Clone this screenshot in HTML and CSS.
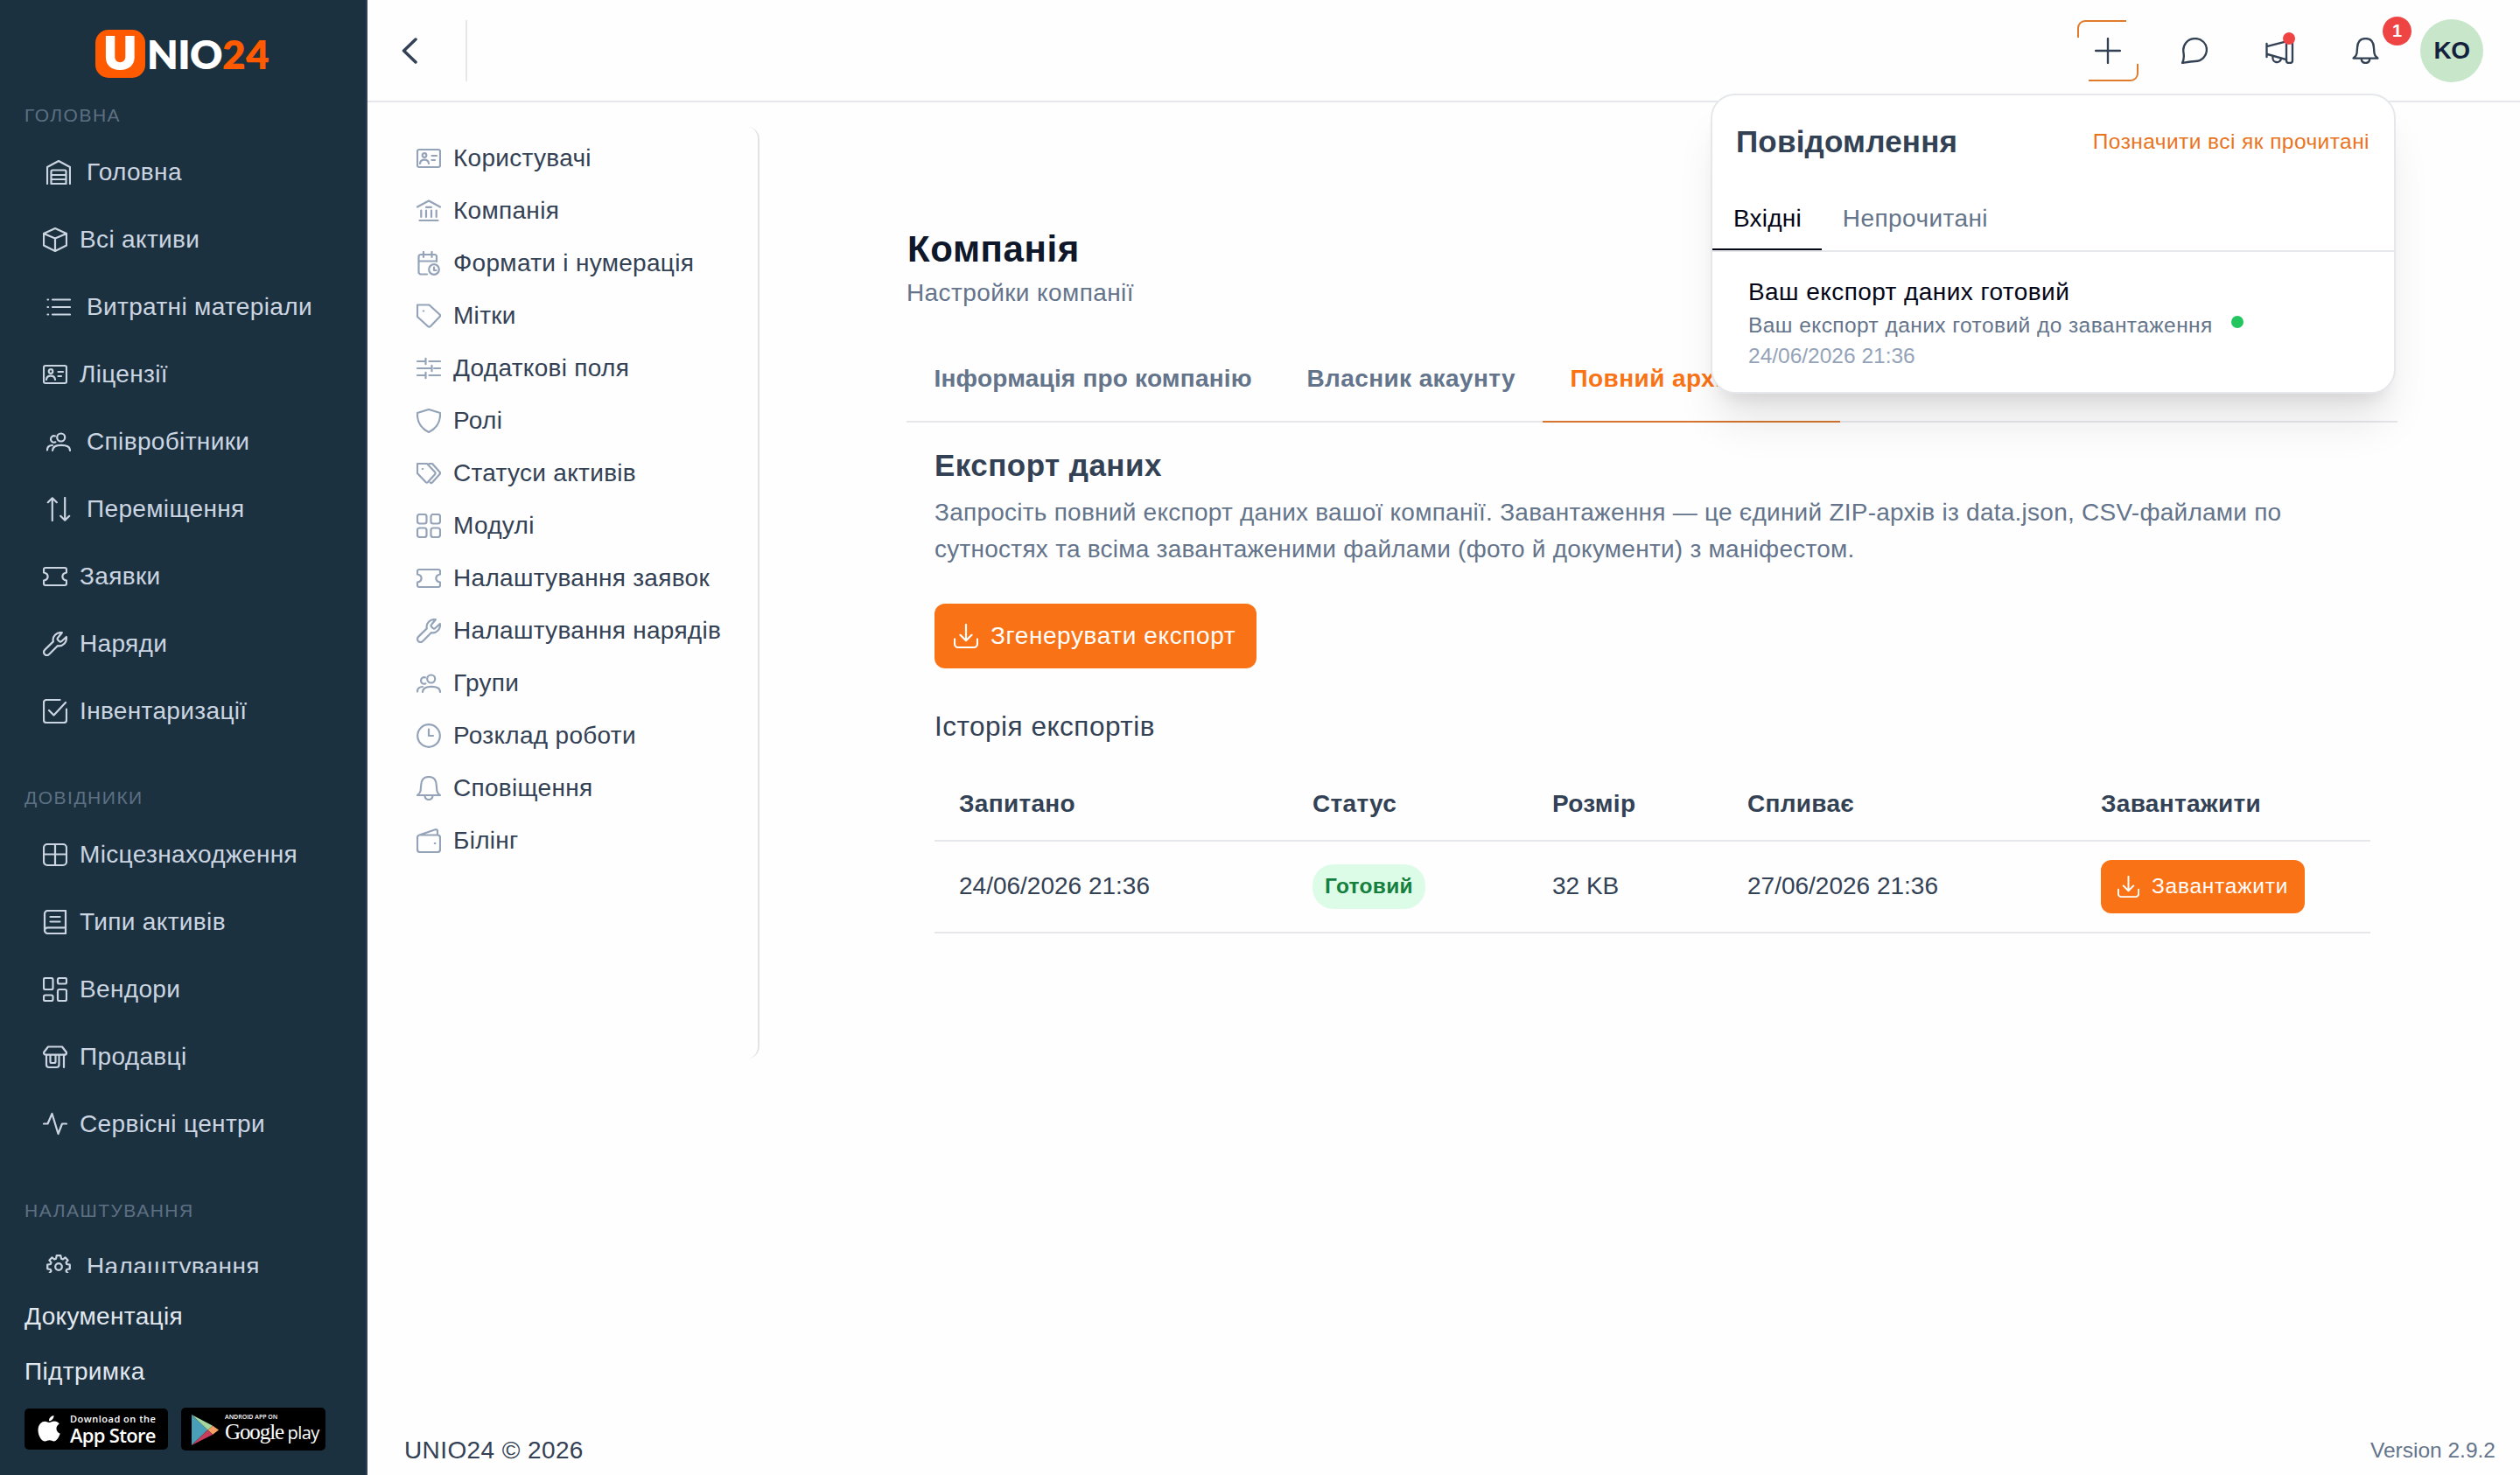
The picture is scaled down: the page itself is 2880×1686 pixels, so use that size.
FILE: index.html
```html
<!DOCTYPE html>
<html lang="uk">
<head>
<meta charset="utf-8">
<meta name="viewport" content="width=device-width, initial-scale=1">
<title>UNIO24</title>
<link rel="stylesheet" href="styles.css">
</head>
<body>
<!-- Icon sprite -->
<svg class="sprite" xmlns="http://www.w3.org/2000/svg">
   <symbol id="i-home" viewBox="0 0 28 28"><path d="M1 27V8L14 1l13 7v19M5.500 27V13a1.500 1.500 0 0 1 1.500-1.500h14a1.500 1.500 0 0 1 1.500 1.500v14zM5.500 17h17M5.500 22h17"/></symbol>
   <symbol id="i-box" viewBox="0 0 28 28"><path d="M14 1l13 6v13.500L14 27 1 20.500V7zM1 7l13 5.500L27 7M14 12.500V27"/></symbol>
   <symbol id="i-list" viewBox="0 0 28 28"><path d="M7 5.500h20M7 14h20M7 22.500h20M1.500 5.500h.6M1.500 14h.6M1.500 22.500h.6"/></symbol>
   <symbol id="i-idcard" viewBox="0 0 28 28"><rect x="1" y="4" width="26" height="20" rx="2"/><circle cx="9" cy="10.500" r="2.300"/><path d="M4 20c.3-3 2-4.300 5-4.300s4.700 1.300 5 4.300M17.500 11H23M17.500 16H21"/></symbol>
   <symbol id="i-users" viewBox="0 0 28 28"><circle cx="16.700" cy="9" r="4.500"/><path d="M7 24c.2-4.500 3.800-6.200 10-6.200s10 1.700 10 6.200M10.300 14.300C7.500 15.600 5 13.800 5 11s2.500-4.600 5-3.600M1 23.500c0-3.500 1.500-5.300 6-5.500"/></symbol>
   <symbol id="i-sort" viewBox="0 0 28 28"><path d="M6.800 27V1.500M1.800 6.200l5-4.900 5 4.900M21.200 1v25.500M16.200 21.800l5 4.900 5-4.900"/></symbol>
   <symbol id="i-ticket" viewBox="0 0 28 28"><path d="M3 4h22a2 2 0 0 1 2 2v3.500c-2.600.4-4.600 2.200-4.600 4.500s2 4.100 4.600 4.500V22a2 2 0 0 1-2 2H3a2 2 0 0 1-2-2v-3.500c2.600-.4 4.600-2.200 4.600-4.500S3.600 9.900 1 9.500V6a2 2 0 0 1 2-2z"/></symbol>
   <symbol id="i-wrench" viewBox="0 0 28 28"><path d="M17.500 6.500c-1 1-1.200 2-.3 3l1.500 1.500c.9.900 2 .8 3-.2L26.800 6c1 6-4 11.500-10 10.200L7.300 25.800c-3.500 3.500-8.600-1.300-5.200-4.900L11.800 11.400C10.500 5.500 15.500.2 21.800 1.200z"/></symbol>
   <symbol id="i-check" viewBox="0 0 28 28"><path d="M19.500 1H4a3 3 0 0 0-3 3v20a3 3 0 0 0 3 3h20a3 3 0 0 0 3-3V11.500M7 13l5.500 5.500L26 4"/></symbol>
   <symbol id="i-table" viewBox="0 0 28 28"><rect x="1" y="2" width="26" height="24" rx="4"/><path d="M1 13.500h26M14 2v24"/></symbol>
   <symbol id="i-book" viewBox="0 0 28 28"><path d="M26 1H5.500A3.500 3.500 0 0 0 2 4.500v19A3.500 3.500 0 0 0 5.500 27H26zM2 24c0-2.500 1.500-3.700 3.500-3.700H26M8.500 8h11M8.500 13.500h11"/></symbol>
   <symbol id="i-objects" viewBox="0 0 28 28"><rect x="1" y="1" width="10.500" height="13" rx="1.800"/><rect x="17" y="1" width="10" height="6.500" rx="1.800"/><rect x="1" y="20.500" width="10.500" height="6.500" rx="1.800"/><rect x="17" y="14" width="10" height="13" rx="1.800"/></symbol>
   <symbol id="i-shop" viewBox="0 0 28 28"><path d="M6 2.500h16l5 6.500c0 1.500-1 2.700-2.500 2.700h-21C2 11.700 1 10.500 1 9zM4 12v11a3 3 0 0 0 3 3h8.500a3 3 0 0 0 3-3V12M8.500 12v7.500a1.500 1.500 0 0 0 1.500 1.500h3a1.500 1.500 0 0 0 1.500-1.500V12M24 12v14"/></symbol>
   <symbol id="i-wave" viewBox="0 0 28 28"><path d="M1 13.500h4.500L10.500 2l7 23 4.500-11.500h5"/></symbol>
   <symbol id="i-cog" viewBox="-14 -14 28 28"><path d="M9.300-3 12.800-2.300V2.300L9.300 3 8.500 4.900 10.600 7.500 7.500 10.600 4.900 8.500 3 9.300 2.300 12.800H-2.300L-3 9.300-4.900 8.500-7.500 10.600-10.600 7.500-8.500 4.900-9.300 3-12.800 2.300V-2.300L-9.300-3-8.500-4.900-10.600-7.500-7.500-10.600-4.900-8.500-3-9.300-2.300-12.800H2.300L3-9.300 4.900-8.500 7.500-10.600 10.600-7.500 8.500-4.900z"/><circle r="3.800"/></symbol>
   <symbol id="i-bank" viewBox="0 0 28 28"><path d="M1 9.500L14 2.500l13 7M11 9.800h6M5.300 13.500v7.500M11 13.500v7.500M17 13.500v7.500M22.700 13.500v7.500M3.500 25h21"/></symbol>
   <symbol id="i-calendar" viewBox="0 0 28 28"><path d="M12 26.500H5a2.500 2.500 0 0 1-2.500-2.500V6.500A2.500 2.500 0 0 1 5 4h15.500A2.500 2.500 0 0 1 23 6.500V12M2.500 11.500H23M8 1v6M17.500 1v6M20 18.500V22h2.500"/><circle cx="20" cy="21" r="5.800"/></symbol>
   <symbol id="i-tag" viewBox="0 0 28 28"><path d="M1 1.500h13.500L26.500 12.500c.8.900.8 1.700 0 2.500L16 26c-.9.900-2 .9-3 0L1 15zM7.800 8.500h.4"/></symbol>
   <symbol id="i-sliders" viewBox="0 0 28 28"><path d="M1 6h8.500M14.500 6H27M1 14h16M20 14h7M1 22h8.500M14.500 22H27M10.500 2.800v6.400M17.500 10.800v6.400M10.500 18.800v6.400"/></symbol>
   <symbol id="i-shield" viewBox="0 0 28 28"><path d="M14 1l13 4c.5 10-3.500 17.500-13 22C4.500 22.500.5 15 1 5z"/></symbol>
   <symbol id="i-tags" viewBox="0 0 28 28"><path d="M1 3h11l9 9.500c.8 1 .8 1.800 0 2.700l-8 8.800c-.8.800-1.700.8-2.500 0L1 14zM14.500 3H18l8.500 9.500c.7.900.7 1.700 0 2.600L18 24.500c-.8.700-1.600.7-2.300 0M6.800 9h.4"/></symbol>
   <symbol id="i-grid" viewBox="0 0 28 28"><rect x="1" y="1" width="10.500" height="10.500" rx="2.500"/><rect x="16.500" y="1" width="10.500" height="10.500" rx="2.500"/><rect x="1" y="16.500" width="10.500" height="10.500" rx="2.500"/><rect x="16.500" y="16.500" width="10.500" height="10.500" rx="2.500"/></symbol>
   <symbol id="i-clock" viewBox="0 0 28 28"><circle cx="14" cy="14" r="12.800"/><path d="M14 6.500V14h5"/></symbol>
   <symbol id="i-bell" viewBox="0 0 28 28"><path d="M1 22h26c-1.800-1.500-3.500-2.500-3.700-5.500l-.5-6C22.500 4 19 1 14 1S5.500 4 5.200 10.500l-.5 6C4.500 19.500 2.800 20.500 1 22zM9.500 22.500c.5 6 8.500 6 9 0"/></symbol>
   <symbol id="i-wallet" viewBox="0 0 28 28"><path d="M4 7.500h20a3 3 0 0 1 3 3V24a3 3 0 0 1-3 3H4a3 3 0 0 1-3-3V10.500a3 3 0 0 1 2.200-3L21.500 1.300c1.400-.4 2.500.4 2.500 1.700v4.500M20.800 17h.6"/></symbol>
   <symbol id="i-download" viewBox="0 0 28 28"><path d="M1 17.500V23a4 4 0 0 0 4 4h18a4 4 0 0 0 4-4v-5.500M14 1v18M7.500 12.800l6.500 6.500 6.500-6.500"/></symbol>
   <symbol id="i-comment" viewBox="0 0 28 28"><path d="M1 27c1.800-3.600 2-7 1.300-11C.9 7.500 6.800 1 14.800 1 21.500 1 27 6.200 27 12.900s-5.300 12.300-12.200 12.300C10.300 25.200 6.500 26 1 27z"/></symbol>
   <symbol id="i-megaphone" viewBox="0 0 30 28"><path d="M1 6.500v14M1 9.500L22 4M1 17.500L22 23.500"/><rect x="22" y="1" width="6.500" height="26" rx="2.500"/><path d="M7.500 20.500c-1 6.500 7.500 8 9 1.800"/></symbol>
   <symbol id="i-plus" viewBox="0 0 28 28"><path d="M14 1v26M1 14h26"/></symbol>
</svg>

<!-- Left sidebar -->
<aside class="sidebar">
   <div class="sidebar-scroll">
      <div class="logo">
         <span class="logo-mark">U</span><span class="logo-name">NIO</span><span class="logo-num">24</span>
      </div>
      <div class="menu-label">ГОЛОВНА</div>
      <nav class="menu">
         <a class="menu-item root"><svg class="icon"><use href="#i-home"/></svg>Головна</a>
         <a class="menu-item"><svg class="icon"><use href="#i-box"/></svg>Всі активи</a>
         <a class="menu-item root"><svg class="icon"><use href="#i-list"/></svg>Витратні матеріали</a>
         <a class="menu-item"><svg class="icon"><use href="#i-idcard"/></svg>Ліцензії</a>
         <a class="menu-item root"><svg class="icon"><use href="#i-users"/></svg>Співробітники</a>
         <a class="menu-item root"><svg class="icon"><use href="#i-sort"/></svg>Переміщення</a>
         <a class="menu-item"><svg class="icon"><use href="#i-ticket"/></svg>Заявки</a>
         <a class="menu-item"><svg class="icon"><use href="#i-wrench"/></svg>Наряди</a>
         <a class="menu-item"><svg class="icon"><use href="#i-check"/></svg>Інвентаризації</a>
      </nav>
      <div class="menu-label next">ДОВІДНИКИ</div>
      <nav class="menu">
         <a class="menu-item"><svg class="icon"><use href="#i-table"/></svg>Місцезнаходження</a>
         <a class="menu-item"><svg class="icon"><use href="#i-book"/></svg>Типи активів</a>
         <a class="menu-item"><svg class="icon"><use href="#i-objects"/></svg>Вендори</a>
         <a class="menu-item"><svg class="icon"><use href="#i-shop"/></svg>Продавці</a>
         <a class="menu-item"><svg class="icon"><use href="#i-wave"/></svg>Сервісні центри</a>
      </nav>
      <div class="menu-label next last">НАЛАШТУВАННЯ</div>
      <nav class="menu">
         <a class="menu-item root"><svg class="icon"><use href="#i-cog"/></svg>Налаштування</a>
      </nav>
   </div>
   <div class="sidebar-footer">
      <a class="help-link">Документація</a>
      <a class="help-link">Підтримка</a>
      <div class="stores">
         <a class="store apple">
            <svg class="apple-logo" viewBox="0 0 26 32"><path d="M18.500 1c.3 3.200-2.500 6.300-5.500 6.300C12.700 4.300 15.400 1.300 18.500 1zM13.200 9c1.500 0 3.300-1.600 5.800-1.600 2.400 0 4.500 1.200 5.800 3.100-4.900 3-4.200 9.200.9 11.300-1.500 4.300-4.200 8.700-7 8.700-2 0-2.700-1.200-5.100-1.200s-3.300 1.200-5.100 1.200C4.500 30.500.5 24 .5 17.700.5 11 4.700 7.700 8.300 7.700c2.200 0 3.700 1.300 4.900 1.300z"/></svg>
            <span class="store-text"><small>Download on the</small><b>App Store</b></span>
         </a>
         <a class="store google">
            <svg class="play-logo" viewBox="0 0 32 36"><path fill="#4a9fb8" d="M0 0v36l19-18z"/><path fill="#a5d6a0" d="M0 0l25 13-6 5z"/><path fill="#f5a062" d="M25 13l7 5-7 5.500-6-5.500z"/><path fill="#c73d5c" d="M0 36l19-18 6 5.500z"/></svg>
            <span class="store-text"><small>ANDROID APP ON</small><span class="gplay"><i>Google</i> play</span></span>
         </a>
      </div>
   </div>
</aside>

<div class="page">
   <header class="topbar">
      <svg class="back" viewBox="0 0 18 30"><path d="M16 2L2.500 15 16 28"/></svg>
      <span class="divider"></span>
      <div class="actions">
         <span class="add">
            <svg class="frame" viewBox="0 0 70 70"><path d="M1 20V9a8 8 0 0 1 8-8h47M69 50v11a8 8 0 0 1-8 8H13"/></svg>
            <svg class="icon"><use href="#i-plus"/></svg>
         </span>
         <svg class="icon comment"><use href="#i-comment"/></svg>
         <span class="news"><svg class="icon"><use href="#i-megaphone"/></svg><i class="news-dot"></i></span>
         <span class="alerts"><svg class="icon"><use href="#i-bell"/></svg><b class="count">1</b></span>
         <span class="avatar">KO</span>
      </div>

      <!-- Notifications popup -->
      <section class="popup">
         <div class="popup-head">
            <h3>Повідомлення</h3>
            <a>Позначити всі як прочитані</a>
         </div>
         <div class="popup-tabs">
            <span class="popup-tab active">Вхідні</span>
            <span class="popup-tab">Непрочитані</span>
         </div>
         <div class="note">
            <div class="note-text">
               <p class="note-title">Ваш експорт даних готовий</p>
               <p class="note-desc">Ваш експорт даних готовий до завантаження</p>
               <p class="note-date">24/06/2026 21:36</p>
            </div>
            <i class="note-dot"></i>
         </div>
      </section>
   </header>

   <div class="content">
      <nav class="settings">
         <a class="settings-item"><svg class="icon"><use href="#i-idcard"/></svg>Користувачі</a>
         <a class="settings-item"><svg class="icon"><use href="#i-bank"/></svg>Компанія</a>
         <a class="settings-item"><svg class="icon"><use href="#i-calendar"/></svg>Формати і нумерація</a>
         <a class="settings-item"><svg class="icon"><use href="#i-tag"/></svg>Мітки</a>
         <a class="settings-item"><svg class="icon"><use href="#i-sliders"/></svg>Додаткові поля</a>
         <a class="settings-item"><svg class="icon"><use href="#i-shield"/></svg>Ролі</a>
         <a class="settings-item"><svg class="icon"><use href="#i-tags"/></svg>Статуси активів</a>
         <a class="settings-item"><svg class="icon"><use href="#i-grid"/></svg>Модулі</a>
         <a class="settings-item"><svg class="icon"><use href="#i-ticket"/></svg>Налаштування заявок</a>
         <a class="settings-item"><svg class="icon"><use href="#i-wrench"/></svg>Налаштування нарядів</a>
         <a class="settings-item"><svg class="icon"><use href="#i-users"/></svg>Групи</a>
         <a class="settings-item"><svg class="icon"><use href="#i-clock"/></svg>Розклад роботи</a>
         <a class="settings-item"><svg class="icon"><use href="#i-bell"/></svg>Сповіщення</a>
         <a class="settings-item"><svg class="icon"><use href="#i-wallet"/></svg>Білінг</a>
      </nav>

      <main class="company">
         <h1>Компанія</h1>
         <p class="subtitle">Настройки компанії</p>
         <div class="tabs">
            <span class="tab">Інформація про компанію</span>
            <span class="tab owner">Власник акаунту</span>
            <span class="tab active">Повний архів</span>
         </div>
         <div class="panel">
            <h2>Експорт даних</h2>
            <p class="lead">Запросіть повний експорт даних вашої компанії. Завантаження — це єдиний ZIP-архів із data.json, CSV-файлами по<br>сутностях та всіма завантаженими файлами (фото й документи) з маніфестом.</p>
            <button class="btn"><svg class="icon"><use href="#i-download"/></svg>Згенерувати експорт</button>
            <h4>Історія експортів</h4>
            <table class="history">
               <colgroup><col class="c-date"><col class="c-status"><col class="c-size"><col class="c-exp"><col></colgroup>
               <thead>
                  <tr><th>Запитано</th><th>Статус</th><th>Розмір</th><th>Спливає</th><th>Завантажити</th></tr>
               </thead>
               <tbody>
                  <tr>
                     <td>24/06/2026 21:36</td>
                     <td><span class="status">Готовий</span></td>
                     <td>32 KB</td>
                     <td>27/06/2026 21:36</td>
                     <td><button class="btn small"><svg class="icon"><use href="#i-download"/></svg>Завантажити</button></td>
                  </tr>
               </tbody>
            </table>
         </div>
      </main>
   </div>

   <footer class="footer">
      <span class="copyright">UNIO24 © 2026</span>
      <span class="version">Version 2.9.2</span>
   </footer>
</div>
</body>
</html>
```

FILE: styles.css
```css
* {
   box-sizing: border-box;
}

html,
body {
   margin: 0;
   padding: 0;
   height: 100%;
   overflow: hidden;
}

body {
   display: flex;
   font-family: "Liberation Sans", Arial, sans-serif;
   font-size: 28px;
   line-height: 42px;
   color: #334155;
   background: #fefefe;
}

h1, h2, h3, h4, p {
   margin: 0;
}

.sprite {
   position: absolute;
   width: 0;
   height: 0;
}

.icon {
   width: 28px;
   height: 28px;
   flex: none;
   fill: none;
   stroke: currentColor;
   stroke-width: 2.200;
   stroke-linecap: round;
   stroke-linejoin: round;
}

/* Sidebar */
.sidebar {
   width: 420px;
   height: 100%;
   flex: none;
   background: #1c313f;
   border-right: 2px solid #2d435a;
   color: #cbd5e1;
   letter-spacing: 0.35px;
}

.sidebar-scroll {
   height: 1455px;
   padding-top: 34px;
   overflow: hidden;
}

.logo {
   display: flex;
   align-items: center;
   height: 55px;
   margin-left: 109px;
   font-family: Lato, sans-serif;
   font-size: 46px;
   font-weight: 900;
   color: #fff;
}

.logo-mark {
   width: 57px;
   height: 55px;
   margin-right: 2px;
   border-radius: 15px;
   background: #ff5a00;
   font-family: Inter, sans-serif;
   font-size: 52px;
   line-height: 54px;
   text-align: center;
}

.logo-num {
   color: #ff5a00;
   font-weight: 800;
}

.logo-name {
   font-weight: 800;
   letter-spacing: -0.5px;
}

.menu-label {
   height: 40px;
   margin: 22px 0 7px 28px;
   line-height: 41px;
   font-size: 21px;
   letter-spacing: 1.5px;
   color: #5d7083;
}

.menu-label.next {
   margin-top: 40px;
}

.menu-label.last {
   margin-bottom: 6px;
}

.menu-item {
   display: flex;
   align-items: center;
   gap: 14px;
   height: 77px;
   padding-left: 49px;
}

.menu-item.root {
   gap: 18px;
   padding-left: 53px;
}

.sidebar-footer {
   padding: 18px 0 0 28px;
   color: #e2e8f0;
}

.help-link {
   display: block;
   height: 63px;
   line-height: 63px;
}

.stores {
   display: flex;
   align-items: center;
   gap: 15px;
   margin-top: 10px;
}

.store {
   display: flex;
   align-items: center;
   width: 164px;
   height: 47px;
   border-radius: 5px;
   background: #000;
   color: #fff;
   font-family: "Open Sans", sans-serif;
}

.store.google {
   width: 165px;
   height: 49px;
}

.apple-logo {
   width: 26px;
   height: 32px;
   margin: 0 11px 2px 15px;
   fill: #fff;
}

.play-logo {
   width: 31px;
   height: 35px;
   margin: 2px 7px 0 12px;
}

.store-text {
   display: flex;
   flex-direction: column;
   white-space: nowrap;
}

.apple small {
   font-size: 11px;
   line-height: 13px;
   font-weight: 600;
   letter-spacing: 0.5px;
}

.apple b {
   font-size: 22px;
   line-height: 24px;
   font-weight: 600;
   letter-spacing: -0.700px;
}

.google small {
   font-size: 7px;
   line-height: 8px;
   font-weight: 600;
   letter-spacing: 0;
}

.gplay {
   font-size: 20px;
   line-height: 26px;
   letter-spacing: -0.6px;
}

.gplay i {
   font-family: "Liberation Serif", serif;
   font-style: normal;
   font-size: 25px;
   letter-spacing: -1.1px;
}

/* Page */
.page {
   display: flex;
   flex-direction: column;
   flex: 1;
}

.topbar {
   position: relative;
   display: flex;
   align-items: center;
   height: 117px;
   padding: 0 42px 0 39px;
   border-bottom: 2px solid #e5e7eb;
}

.back {
   width: 18px;
   height: 30px;
   fill: none;
   stroke: #334155;
   stroke-width: 3.500;
   stroke-linecap: round;
   stroke-linejoin: round;
}

.divider {
   width: 2px;
   height: 70px;
   margin-left: 55px;
   background: #e5e7eb;
}

.actions {
   display: flex;
   align-items: center;
   margin-left: auto;
   color: #334155;
}

.actions .icon {
   width: 30px;
   height: 30px;
}

.add {
   position: relative;
   display: flex;
   align-items: center;
   justify-content: center;
   width: 70px;
   height: 70px;
}

.frame {
   position: absolute;
   inset: 0;
   fill: none;
   stroke: #e07b2c;
   stroke-width: 2;
}

.comment {
   margin-left: 49px;
}

.news {
   position: relative;
   display: flex;
   margin-left: 66px;
}

.news .icon {
   width: 33px;
}

.news-dot {
   position: absolute;
   top: -6px;
   right: -1px;
   width: 14px;
   height: 14px;
   border-radius: 50%;
   background: #ef4444;
}

.alerts {
   position: relative;
   display: flex;
   margin-left: 66px;
}

.alerts .icon {
   width: 31px;
}

.count {
   position: absolute;
   top: -24px;
   left: 35px;
   width: 33px;
   height: 33px;
   border-radius: 50%;
   background: #ef4444;
   color: #fff;
   font-size: 20px;
   line-height: 32px;
   text-align: center;
}

.avatar {
   width: 72px;
   height: 72px;
   margin-left: 47px;
   border-radius: 50%;
   background: #c8e6c9;
   color: #14213d;
   font-size: 28px;
   font-weight: bold;
   letter-spacing: -0.6px;
   line-height: 72px;
   text-align: center;
}

/* Notifications */
.popup {
   position: absolute;
   top: 107px;
   right: 142px;
   width: 783px;
   height: 343px;
   border: 2px solid #e5e7eb;
   border-radius: 28px;
   background: #fff;
   box-shadow: 0 40px 50px -10px rgba(0, 0, 0, 0.1), 0 16px 20px -12px rgba(0, 0, 0, 0.1);
   letter-spacing: 0.43px;
   z-index: 10;
}

.popup-head {
   display: flex;
   align-items: center;
   justify-content: space-between;
   height: 105px;
   padding: 0 28px 0 27px;
}

.popup-head h3 {
   font-size: 35px;
   letter-spacing: 0.2px;
}

.popup-head a {
   color: #e8741e;
   font-size: 24.500px;
}

.popup-tabs {
   display: flex;
   height: 74px;
   border-bottom: 2px solid #e5e7eb;
}

.popup-tab {
   padding: 0 24px;
   line-height: 72px;
   color: #64748b;
}

.popup-tab.active {
   padding: 0 23px 0 24px;
   border-bottom: 2px solid #020617;
   color: #020617;
   letter-spacing: 0.2px;
}

.note {
   display: flex;
   align-items: center;
   gap: 21px;
   padding: 27px 41px;
}

.note-title {
   line-height: 38px;
   color: #020617;
}

.note-desc {
   margin-top: 1px;
   font-size: 24.500px;
   line-height: 35px;
   color: #64748b;
}

.note-date {
   font-size: 24.500px;
   letter-spacing: 0;
   line-height: 35px;
   color: #94a3b8;
}

.note-dot {
   width: 14px;
   height: 14px;
   margin-bottom: 3px;
   border-radius: 50%;
   background: #22c55e;
}

/* Content */
.content {
   display: flex;
   flex: 1;
   padding: 28px 140px 0 42px;
}

.settings {
   width: 406px;
   height: 1065px;
   flex: none;
   padding: 6px 0 0 14px;
   border-right: 2px solid #e2e3e6;
   border-radius: 14px;
   letter-spacing: 0.3px;
}

.settings-item {
   display: flex;
   align-items: center;
   gap: 14px;
   height: 60px;
}

.settings-item .icon {
   color: #94a3b8;
}

.company {
   flex: 1;
   margin-left: 168px;
   padding-top: 115px;
}

h1 {
   padding-left: 1px;
   font-size: 42px;
   line-height: 50px;
   letter-spacing: 0.6px;
   color: #0f172a;
}

.subtitle {
   margin-top: 4px;
   letter-spacing: 0.4px;
   color: #64748b;
}

.tabs {
   display: flex;
   height: 100px;
   margin-top: 27px;
   border-bottom: 2px solid #e5e7eb;
}

.tab {
   height: 100px;
   padding: 0 31px 0 31.500px;
   line-height: 99px;
   font-weight: bold;
   letter-spacing: 0.2px;
   color: #64748b;
}

.tab.owner {
   letter-spacing: 0.4px;
}

.tab.active {
   width: 340px;
   border-bottom: 2px solid #d5752f;
   color: #f97316;
   letter-spacing: 0.4px;
   white-space: nowrap;
}

.panel {
   padding: 28px 31px 0 32px;
}

h2 {
   font-size: 35px;
   line-height: 42px;
   letter-spacing: 0.45px;
}

.lead {
   margin-top: 12px;
   letter-spacing: 0.25px;
   color: #64748b;
   white-space: nowrap;
}

.btn {
   display: flex;
   align-items: center;
   gap: 14px;
   width: 368px;
   height: 74px;
   margin: 41px 0 0;
   padding: 0 22px;
   border: 0;
   border-radius: 12px;
   background: #f97316;
   color: #fff;
   font-family: inherit;
   font-size: 28px;
   letter-spacing: 0.6px;
   white-space: nowrap;
}

h4 {
   margin-top: 45px;
   font-size: 31.500px;
   font-weight: normal;
   letter-spacing: 0.5px;
}

.history {
   width: 1641px;
   margin-top: 24px;
   border-collapse: collapse;
   table-layout: fixed;
}

.c-date { width: 404px; }
.c-status { width: 274px; }
.c-size { width: 223px; }
.c-exp { width: 404px; }

.history th,
.history td {
   padding: 0 0 0 28px;
   border-bottom: 2px solid #e5e7eb;
   text-align: left;
   vertical-align: middle;
}

.history th {
   height: 86px;
   padding-top: 2px;
   letter-spacing: 0.3px;
}

.history td {
   height: 105px;
   padding-bottom: 1px;
}

.status {
   display: inline-block;
   height: 51px;
   padding: 0 14px;
   border-radius: 24px;
   background: #dcfce7;
   color: #15803d;
   font-size: 24.500px;
   font-weight: bold;
   letter-spacing: 0.3px;
   line-height: 50px;
   vertical-align: middle;
}

.btn.small {
   width: 233px;
   height: 61px;
   margin: 0;
   padding: 0 19px;
   font-size: 24.500px;
   letter-spacing: 0.75px;
}

.btn.small .icon {
   width: 25px;
   height: 25px;
}

.footer {
   display: flex;
   align-items: center;
   justify-content: space-between;
   height: 56px;
   padding: 0 28px 0 42px;
}

.copyright {
   letter-spacing: 0.4px;
}

.version {
   font-size: 24.500px;
   color: #64748b;
}
```
